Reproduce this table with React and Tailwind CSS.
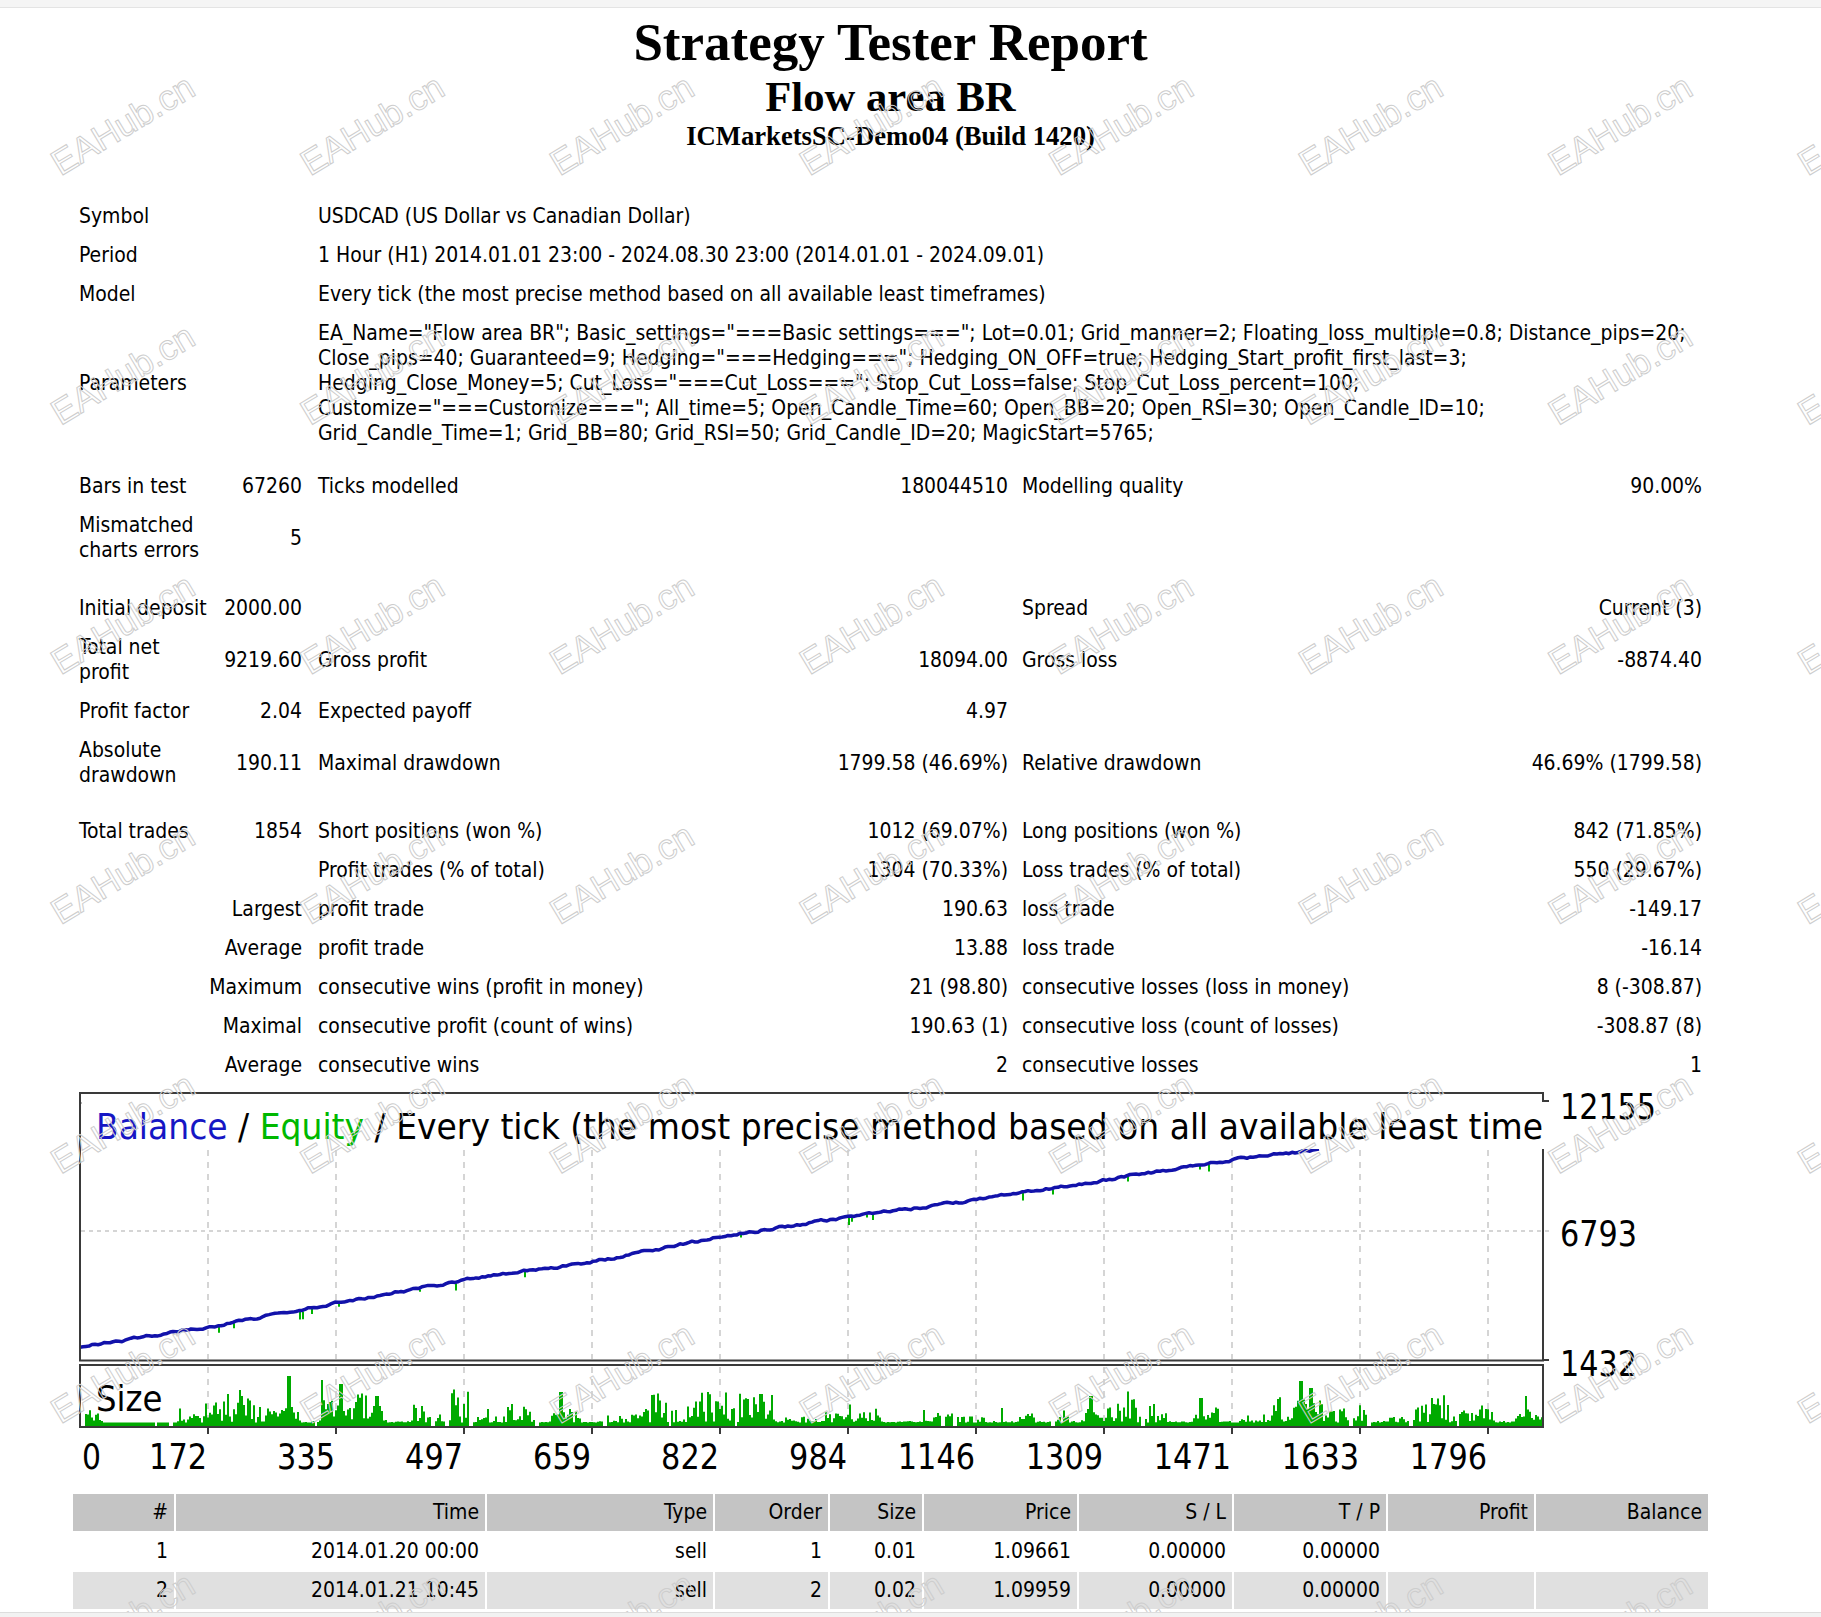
import React from "react";

const SANS = "'DejaVu Sans Condensed', Tahoma, 'Liberation Sans', sans-serif";

function makeRng(seed) {
  let s = seed >>> 0;
  return () => {
    s = (Math.imul(s, 1664525) + 1013904223) >>> 0;
    return s / 4294967296;
  };
}

const GRID_X = [208, 336, 464, 592, 720, 848, 976, 1104, 1232, 1360, 1488];
const X_LABELS = ["172", "335", "497", "659", "822", "984", "1146", "1309", "1471", "1633", "1796"];

const CHART = (() => {
  const r = makeRng(20240830);
  const keys = [
    [80, 1347], [208, 1327], [336, 1303], [464, 1280], [592, 1262], [720, 1237],
    [848, 1217], [976, 1200], [1104, 1180], [1232, 1160], [1321, 1149],
  ];
  const pts = [];
  const dips = [];
  let k = 0;
  let wob = 0;
  for (let x = 80; x <= 1321; x += 3) {
    while (k < keys.length - 2 && x > keys[k + 1][0]) k++;
    const [x0, y0] = keys[k];
    const [x1, y1] = keys[k + 1];
    const t = (x - x0) / (x1 - x0);
    wob = wob * 0.6 + (r() - 0.5) * 2.0;
    const y = y0 + (y1 - y0) * t + wob;
    pts.push(`${x},${y.toFixed(1)}`);
    if (r() < 0.045) dips.push([x + 1, y + 1, 2 + r() * 6]);
  }

  const spikes = [[288, 50], [340, 42], [376, 30], [560, 34], [760, 32], [1090, 30], [1300, 45], [1310, 38], [1525, 30], [1200, 28]];
  let d = "M81 1426";
  let amp = 10;
  let segLeft = 0;
  let gap = 0;
  for (let x = 81; x < 1542; x += 2) {
    if (segLeft <= 0) {
      const q = r();
      amp = q < 0.3 ? 1.5 : 6 + Math.pow(r(), 1.6) * 30;
      segLeft = 8 + Math.floor(r() * 30);
      if (r() < 0.35) gap = 1 + Math.floor(r() * 2);
    }
    segLeft -= 2;
    let h;
    if (gap > 0) {
      h = 0;
      gap--;
    } else {
      h = 3.5 + Math.pow(r(), 1.4) * amp;
      if (r() < 0.03) h += r() * 18;
    }
    for (const [sx, sh] of spikes) {
      if (Math.abs(x - sx) < 2) h = Math.max(h, sh);
      else if (Math.abs(x - sx) < 14) h = Math.max(h, sh * (0.25 + 0.5 * r()) * (1 - Math.abs(x - sx) / 16));
    }
    if (x >= 92 && x <= 176) h = gap > 0 ? 0 : Math.min(h, 3.5 + (x < 104 ? r() * 10 : 0));
    h = Math.min(h, 56);
    const y = (1426 - h).toFixed(1);
    d += `V${y}H${x + 2}`;
  }
  d += "V1426Z";
  return { line: pts.join(" "), dips, bars: d };
})();

const WM = (() => {
  const out = [];
  for (let j = 0; j < 7; j++) {
    for (let i = 0; i < 8; i++) {
      out.push([122.5 + 249.6 * i, 124.5 + 249.6 * j]);
    }
  }
  return out;
})();

function Chart() {
  return (
    <svg width="1635" height="409" viewBox="73 1085 1635 409" className="block" fontFamily={SANS}>
      <defs>
        <clipPath id="titleClip">
          <rect x="82" y="1095" width="1461" height="60" />
        </clipPath>
      </defs>
      {GRID_X.map((x) => (
        <line key={"g" + x} x1={x} x2={x} y1={1150} y2={1359} stroke="#c8c8c8" strokeWidth="1.5" strokeDasharray="6 6" />
      ))}
      <line x1="81" x2="1549" y1="1231" y2="1231" stroke="#c8c8c8" strokeWidth="1.5" strokeDasharray="4 4" />
      {GRID_X.map((x) => (
        <line key={"s" + x} x1={x} x2={x} y1={1367} y2={1426} stroke="#c8c8c8" strokeWidth="1.5" strokeDasharray="6 6" />
      ))}
      <path d={CHART.bars} fill="#00aa00" />
      {CHART.dips.map(([x, y, dd], i) => (
        <line key={"d" + i} x1={x} x2={x} y1={y} y2={y + dd} stroke="#00b400" strokeWidth="2" />
      ))}
      <polyline points={CHART.line} fill="none" stroke="#1212aa" strokeWidth="3.5" strokeLinejoin="bevel" />
      <rect x="80" y="1093" width="1463" height="267.5" fill="none" stroke="#3a3a3a" strokeWidth="2" />
      <rect x="80" y="1365" width="1463" height="62" fill="none" stroke="#3a3a3a" strokeWidth="2" />
      <line x1="1543" x2="1549" y1="1101" y2="1101" stroke="#3a3a3a" strokeWidth="2" />
      <line x1="1543" x2="1549" y1="1360" y2="1360" stroke="#3a3a3a" strokeWidth="2" />
      <line x1="81" x2="86" y1="1103" y2="1103" stroke="#9a9a9a" strokeWidth="1.5" />
      {GRID_X.map((x) => (
        <line key={"t" + x} x1={x} x2={x} y1={1427} y2={1434} stroke="#3a3a3a" strokeWidth="2" />
      ))}
      <rect x="82" y="1102" width="1464" height="47" fill="#ffffff" />
      <text
        clipPath="url(#titleClip)"
        x="96"
        y="1139"
        fontSize="35"
        textLength="1575"
        lengthAdjust="spacingAndGlyphs"
      >
        <tspan fill="#1616c4">Balance</tspan>
        <tspan fill="#000000"> / </tspan>
        <tspan fill="#00b800">Equity</tspan>
        <tspan fill="#000000"> / Every tick (the most precise method based on all available least timeframes)</tspan>
      </text>
      <text x="96" y="1411" fontSize="36" fill="#000">Size</text>
      <text x="1560" y="1119" fontSize="36" fill="#000" textLength="96" lengthAdjust="spacingAndGlyphs">12155</text>
      <text x="1560" y="1246" fontSize="36" fill="#000" textLength="77" lengthAdjust="spacingAndGlyphs">6793</text>
      <text x="1560" y="1376" fontSize="36" fill="#000" textLength="77" lengthAdjust="spacingAndGlyphs">1432</text>
      <text x="82" y="1469" fontSize="36" fill="#000" textLength="19" lengthAdjust="spacingAndGlyphs">0</text>
      {X_LABELS.map((t, i) => (
        <text
          key={t}
          x={GRID_X[i] - 1 - t.length * 19.3}
          y="1469"
          fontSize="36"
          fill="#000"
          textLength={t.length * 19.3}
          lengthAdjust="spacingAndGlyphs"
        >
          {t}
        </text>
      ))}
    </svg>
  );
}

const GRID = "grid grid-cols-[139px_96px_400px_306px_400px_294px]";

function Row({ h = "h-[39px]", c1, c2, c3, c4, c5, c6 }) {
  return (
    <div className={`${GRID} ${h}`}>
      <div className="flex items-center pl-[6px] whitespace-nowrap">{c1}</div>
      <div className="flex items-center justify-end pr-[6px] whitespace-nowrap">{c2}</div>
      <div className="flex items-center pl-[10px] whitespace-nowrap">{c3}</div>
      <div className="flex items-center justify-end pr-[6px] whitespace-nowrap">{c4}</div>
      <div className="flex items-center pl-[8px] whitespace-nowrap">{c5}</div>
      <div className="flex items-center justify-end pr-[6px] whitespace-nowrap">{c6}</div>
    </div>
  );
}

function SpanLabelRow({ label, c3, c4, c5, c6 }) {
  return (
    <div className={`${GRID} h-[39px]`}>
      <div className="col-span-2 flex items-center justify-end pr-[6px] whitespace-nowrap">{label}</div>
      <div className="flex items-center pl-[10px] whitespace-nowrap">{c3}</div>
      <div className="flex items-center justify-end pr-[6px] whitespace-nowrap">{c4}</div>
      <div className="flex items-center pl-[8px] whitespace-nowrap">{c5}</div>
      <div className="flex items-center justify-end pr-[6px] whitespace-nowrap">{c6}</div>
    </div>
  );
}

function InfoRow({ label, h = "h-[39px]", children }) {
  return (
    <div className={`${GRID} ${h}`}>
      <div className="flex items-center pl-[6px] whitespace-nowrap">{label}</div>
      <div />
      <div className="col-span-4 flex items-center pl-[10px] whitespace-nowrap">{children}</div>
    </div>
  );
}

const COLS = [
  "w-[101px]", "w-[309px]", "w-[226px]", "w-[113px]", "w-[92px]",
  "w-[153px]", "w-[153px]", "w-[152px]", "w-[146px]", "w-[172px]",
];

function TRow({ cells, bg }) {
  return (
    <div className="flex gap-[2px]">
      {cells.map((c, i) => (
        <div key={i} className={`${COLS[i]} ${bg} shrink-0 h-[37px] flex items-center justify-end pr-[6px] whitespace-nowrap`}>
          {c}
        </div>
      ))}
    </div>
  );
}

export default function App() {
  return (
    <div className="relative w-[1821px] h-[1617px] overflow-hidden bg-white text-black font-['DejaVu_Sans_Condensed','Liberation_Sans',sans-serif] text-[20.95px] leading-[25px]">
      <div className="h-[8px] bg-[#f5f5f5] border-b border-[#e4e4e4]" />
      <div className="ml-[73px] w-[1635px]">
        <div className="pt-[5px] text-center font-['Liberation_Serif','Times_New_Roman',serif] font-bold">
          <div className="text-[53px] leading-[58px]">Strategy Tester Report</div>
          <div className="mt-[2px] text-[42.67px] leading-[47px]">Flow area BR</div>
          <div className="mt-[1px] text-[26.67px] leading-[30px]">ICMarketsSC-Demo04 (Build 1420)</div>
        </div>

        <div className="mt-[46px]">
          <InfoRow label="Symbol">USDCAD (US Dollar vs Canadian Dollar)</InfoRow>
          <InfoRow label="Period">1 Hour (H1) 2014.01.01 23:00 - 2024.08.30 23:00 (2014.01.01 - 2024.09.01)</InfoRow>
          <InfoRow label="Model">Every tick (the most precise method based on all available least timeframes)</InfoRow>
          <InfoRow label="Parameters" h="h-[139px]">
            <div>
              <div>EA_Name="Flow area BR"; Basic_settings="===Basic settings==="; Lot=0.01; Grid_manner=2; Floating_loss_multiple=0.8; Distance_pips=20;</div>
              <div>Close_pips=40; Guaranteed=9; Hedging="===Hedging==="; Hedging_ON_OFF=true; Hedging_Start_profit_first_last=3;</div>
              <div>Hedging_Close_Money=5; Cut_Loss="===Cut_Loss==="; Stop_Cut_Loss=false; Stop_Cut_Loss_percent=100;</div>
              <div>Customize="===Customize==="; All_time=5; Open_Candle_Time=60; Open_BB=20; Open_RSI=30; Open_Candle_ID=10;</div>
              <div>Grid_Candle_Time=1; Grid_BB=80; Grid_RSI=50; Grid_Candle_ID=20; MagicStart=5765;</div>
            </div>
          </InfoRow>
          <div className="h-[14px]" />
          <Row c1="Bars in test" c2="67260" c3="Ticks modelled" c4="180044510" c5="Modelling quality" c6="90.00%" />
          <Row h="h-[64px]" c1={<span>Mismatched<br />charts errors</span>} c2="5" />
          <div className="h-[19px]" />
          <Row c1="Initial deposit" c2="2000.00" c5="Spread" c6="Current (3)" />
          <Row h="h-[64px]" c1={<span>Total net<br />profit</span>} c2="9219.60" c3="Gross profit" c4="18094.00" c5="Gross loss" c6="-8874.40" />
          <Row c1="Profit factor" c2="2.04" c3="Expected payoff" c4="4.97" />
          <Row h="h-[64px]" c1={<span>Absolute<br />drawdown</span>} c2="190.11" c3="Maximal drawdown" c4="1799.58 (46.69%)" c5="Relative drawdown" c6="46.69% (1799.58)" />
          <div className="h-[17px]" />
          <Row c1="Total trades" c2="1854" c3="Short positions (won %)" c4="1012 (69.07%)" c5="Long positions (won %)" c6="842 (71.85%)" />
          <Row c3="Profit trades (% of total)" c4="1304 (70.33%)" c5="Loss trades (% of total)" c6="550 (29.67%)" />
          <SpanLabelRow label="Largest" c3="profit trade" c4="190.63" c5="loss trade" c6="-149.17" />
          <SpanLabelRow label="Average" c3="profit trade" c4="13.88" c5="loss trade" c6="-16.14" />
          <SpanLabelRow label="Maximum" c3="consecutive wins (profit in money)" c4="21 (98.80)" c5="consecutive losses (loss in money)" c6="8 (-308.87)" />
          <SpanLabelRow label="Maximal" c3="consecutive profit (count of wins)" c4="190.63 (1)" c5="consecutive loss (count of losses)" c6="-308.87 (8)" />
          <SpanLabelRow label="Average" c3="consecutive wins" c4="2" c5="consecutive losses" c6="1" />
        </div>

        <Chart />

        <div className="flex flex-col gap-[2px]">
          <TRow bg="bg-[#c4c4c4]" cells={["#", "Time", "Type", "Order", "Size", "Price", "S / L", "T / P", "Profit", "Balance"]} />
          <TRow bg="bg-white" cells={["1", "2014.01.20 00:00", "sell", "1", "0.01", "1.09661", "0.00000", "0.00000", "", ""]} />
          <TRow bg="bg-[#e0e0e0]" cells={["2", "2014.01.21 10:45", "sell", "2", "0.02", "1.09959", "0.00000", "0.00000", "", ""]} />
        </div>
      </div>

      <svg className="absolute left-0 top-0 pointer-events-none" width="1821" height="1617">
        {WM.map(([cx, cy], i) => (
          <text
            key={i}
            x={cx}
            y={cy + 12.5}
            textAnchor="middle"
            fontSize="35.5"
            fontFamily="'Liberation Sans', Arial, sans-serif"
            fill="none"
            stroke="#cdcdcd"
            strokeWidth="1"
            transform={`rotate(-31 ${cx} ${cy})`}
          >
            EAHub.cn
          </text>
        ))}
      </svg>
      <div className="absolute bottom-0 left-0 w-full h-[5px] bg-[#f2f2f2] border-t border-[#dddddd]" />
    </div>
  );
}
